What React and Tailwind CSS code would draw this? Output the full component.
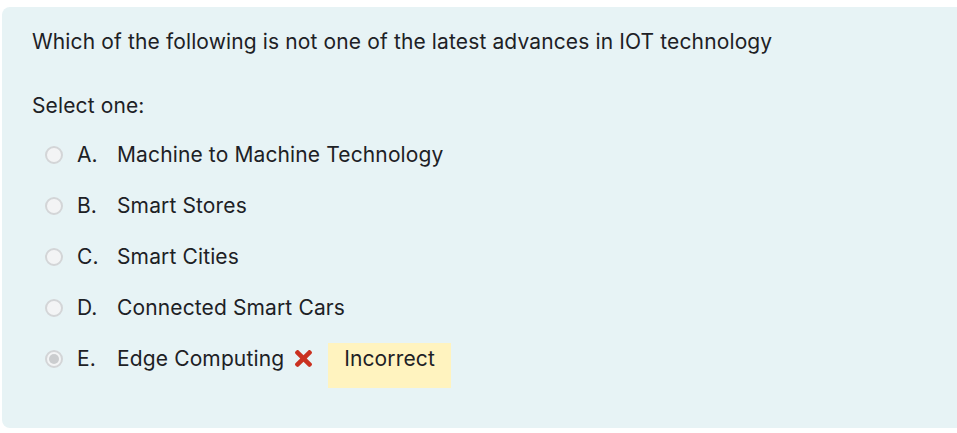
import React from "react";

const options = [
  { letter: "A.", text: "Machine to Machine Technology" },
  { letter: "B.", text: "Smart Stores" },
  { letter: "C.", text: "Smart Cities" },
  { letter: "D.", text: "Connected Smart Cars" },
  { letter: "E.", text: "Edge Computing", checked: true },
];

const Radio = ({ checked }) => (
  <span className="w-[18px] h-[18px] rounded-full border-2 border-[#d3d5d7] bg-[#f3f4f5] flex items-center justify-center shrink-0">
    {checked && <span className="w-[10px] h-[10px] rounded-full bg-[#cbcdcf]" />}
  </span>
);

const Cross = () => (
  <svg width="17" height="17" viewBox="0 80 352 352" className="shrink-0">
    <path
      fill="#ca3120"
      d="M242.72 256l100.07-100.07c12.28-12.28 12.28-32.19 0-44.48l-22.24-22.24c-12.28-12.28-32.19-12.28-44.48 0L176 189.28 75.930 89.21c-12.28-12.28-32.19-12.28-44.48 0L9.21 111.45c-12.28 12.28-12.28 32.19 0 44.48L109.28 256 9.21 356.07c-12.28 12.28-12.28 32.19 0 44.48l22.24 22.240c12.28 12.28 32.2 12.28 44.48 0L176 322.72l100.07 100.07c12.28 12.28 32.2 12.28 44.48 0l22.24-22.24c12.28-12.28 12.28-32.19 0-44.48L242.72 256z"
    />
  </svg>
);

export default function App() {
  return (
    <div
      className="w-[957px] h-[433px] bg-white pl-[2px] pt-[7px] overflow-hidden text-[#1d2125] text-[21px] tracking-[0.13px]"
      style={{ fontFamily: "Inter, Roboto, 'Liberation Sans', sans-serif" }}
    >
      <div className="w-[960px] h-[421px] bg-[#e7f3f5] rounded-l-lg pl-[30px] pt-[20px]">
        <p className="leading-[30px]">
          Which of the following is not one of the latest advances in IOT technology
        </p>
        <p className="leading-[30px] mt-[34px]">Select one:</p>
        <div className="flex flex-col mt-[8px]">
          {options.map((o) => (
            <div key={o.letter} className="flex items-center h-[51px] pl-[13px]">
              <Radio checked={o.checked} />
              <span className="ml-[14px] w-[40px]">{o.letter}</span>
              <span>{o.text}</span>
              {o.checked && (
                <>
                  <span className="ml-[11px] flex">
                    <Cross />
                  </span>
                  <span className="ml-[16px] mt-[13px] h-[45px] px-[16px] pt-[1px] leading-[30px] bg-[#fff3bf]">
                    Incorrect
                  </span>
                </>
              )}
            </div>
          ))}
        </div>
      </div>
    </div>
  );
}
